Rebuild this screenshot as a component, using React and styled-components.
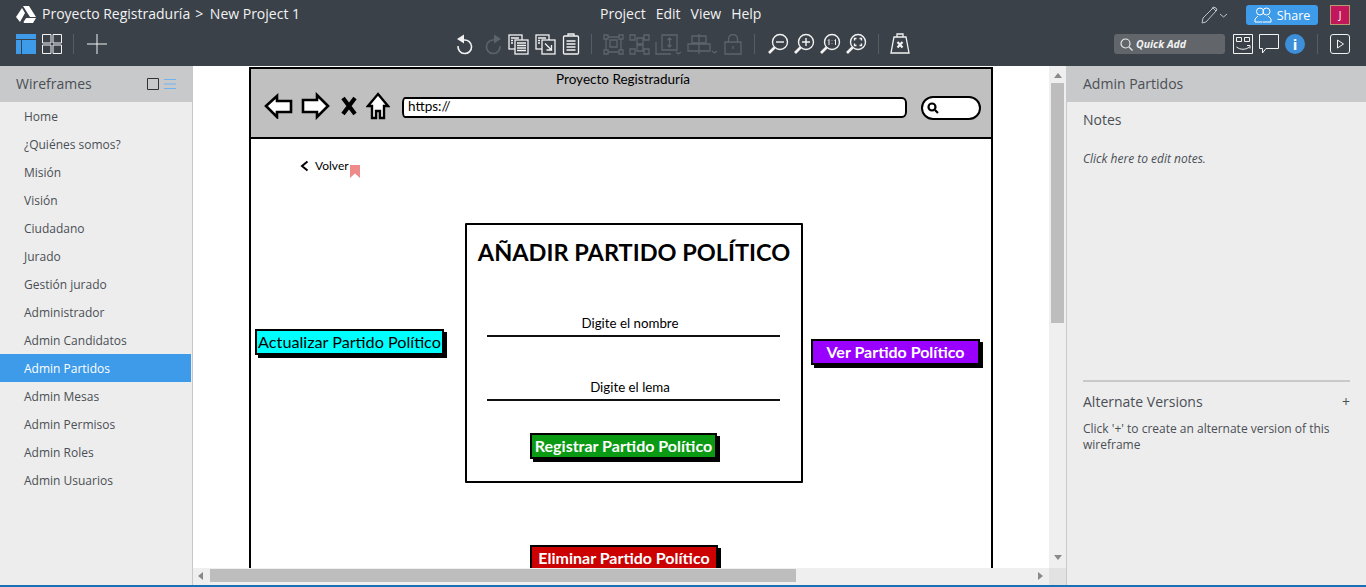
import React from "react";
import styled, { createGlobalStyle } from "styled-components";

const Global = createGlobalStyle`
  html, body { margin: 0; padding: 0; height: 100%; overflow: hidden; background: #3a4149; }
  #root { height: 100%; }
  * { box-sizing: border-box; }
`;

const pages = [
  "Home", "¿Quiénes somos?", "Misión", "Visión", "Ciudadano", "Jurado", "Gestión jurado",
  "Administrador", "Admin Candidatos", "Admin Partidos", "Admin Mesas", "Admin Permisos",
  "Admin Roles", "Admin Usuarios",
];

const Icon = ({ w = 24, h = 24, color = "#f2f2f2", sw = 1.3, children }) => (
  <svg width={w} height={h} viewBox={`0 0 ${w} ${h}`} fill="none" stroke={color} strokeWidth={sw} style={{ display: "block", flex: "none" }}>
    {children}
  </svg>
);

const Undo = ({ color = "#f2f2f2", head, arc }) => (
  <Icon w={20} h={22} color={color} sw={1.6}>
    <path d={arc} />
    <path d={head} fill={color} stroke="none" />
  </Icon>
);

const Docs = ({ arrow }) => (
  <Icon w={21} h={21}>
    <rect x="1" y="1" width="13" height="14" />
    <rect x="7" y="6" width="13" height="14" fill="#3a4149" />
    {arrow ? (
      <path d="M10 9.5 L16.5 16 M16.5 11 V16 H11.5" />
    ) : (
      <path d="M9 9h9M9 11.5h9M9 14h9M9 16.5h9" />
    )}
    <path d="M3 4h8M3 6.5h2M3 9h2" />
  </Icon>
);

const Magnifier = ({ children }) => (
  <Icon w={22} h={22} sw={1.4}>
    <circle cx="13" cy="9" r="7.5" />
    <path d="M7.5 14.5 L2 20" strokeWidth="2.6" />
    {children}
  </Icon>
);

const off = "#5c646c";

const Bar = styled.header`
  height: 66px;
  flex: none;
  background: #3a4149;
  color: #f2f2f2;
  font: 14px "Open Sans", sans-serif;
`;

const BarRow = styled.div`
  display: flex;
  align-items: center;
  height: ${(p) => p.$h}px;
  padding-left: 16px;
`;

const Brand = styled.div`
  width: 584px;
  display: flex;
  align-items: center;
  gap: 6px;
  white-space: nowrap;
  span { padding-bottom: 3px; }
  b { font-weight: 400; margin: 0 3px 0 5px; }
`;

const Menu = styled.nav`
  display: flex;
  gap: 10px;
  padding-bottom: 3px;
`;

const RightTools = styled.div`
  margin-left: auto;
  display: flex;
  align-items: center;
  padding-right: 16px;
`;

const ShareBtn = styled.div`
  width: 72px;
  height: 20px;
  margin-left: 18px;
  border-radius: 3px;
  background: #3d9be9;
  color: #fff;
  font-size: 12.5px;
  display: flex;
  align-items: center;
  justify-content: center;
  gap: 5px;
`;

const Avatar = styled.div`
  width: 20px;
  height: 20px;
  margin-left: 12px;
  background: #c2185b;
  border: 1px solid #b89a70;
  color: #fff;
  font-size: 10px;
  display: flex;
  align-items: center;
  justify-content: center;
`;

const LeftTools = styled.div`
  width: 440px;
  flex: none;
  display: flex;
  align-items: center;
  gap: 6px;
`;

const ToolGroup = styled.div`
  display: flex;
  align-items: center;
  gap: ${(p) => p.$gap || 6}px;
`;

const Sep = styled.i`
  display: block;
  width: 1px;
  height: 20px;
  background: #565d65;
  margin: 0 ${(p) => p.$m || 11}px;
`;

const QuickAdd = styled.div`
  width: 111px;
  height: 20px;
  background: #62666a;
  border-radius: 3px;
  display: flex;
  align-items: center;
  gap: 3px;
  padding-left: 6px;
  margin-right: 8px;
  font-size: 10.5px;
  font-weight: 700;
  font-style: italic;
`;

const Main = styled.main`
  flex: 1;
  min-height: 0;
  display: flex;
`;

const Side = styled.aside`
  width: 193px;
  flex: none;
  background: #ededed;
  border-right: 1px solid #c8c9cb;
  font-family: "Open Sans", sans-serif;
  color: #4a4f55;
`;

const PanelHead = styled.div`
  height: 36px;
  background: #c8c9cb;
  display: flex;
  align-items: center;
  padding: 0 0 2px 16px;
  font-size: 14px;
  color: #4a4f55;
  justify-content: space-between;
`;

const ViewToggle = styled.div`
  display: flex;
  align-items: center;
  gap: 5px;
  padding: 2px 16px 0 0;
`;

const PageItem = styled.div`
  height: 28px;
  line-height: 30px;
  padding-left: 24px;
  font-size: 12px;
  margin-right: 1px;
  background: ${(p) => (p.$active ? "#3d9be9" : "transparent")};
  color: ${(p) => (p.$active ? "#fff" : "#4a4f55")};
`;

const Stage = styled.section`
  flex: 1;
  min-width: 0;
  display: grid;
  grid-template-columns: 1fr 17px;
  grid-template-rows: 1fr 17px;
  border-right: 1px solid #c8c9cb;
`;

const Canvas = styled.div`
  position: relative;
  overflow: hidden;
  background: #fff;
`;

const Frame = styled.div`
  position: absolute;
  left: 56px;
  top: 1px;
  width: 744px;
  height: 700px;
  border: 2px solid #000;
  font-family: Lato, sans-serif;
  color: #000;
`;

const BrowserBar = styled.div`
  height: 70px;
  background: #c0c0c0;
  border-bottom: 2px solid #000;
  padding: 2px 10px 0 13px;
`;

const BrowserTitle = styled.div`
  text-align: center;
  font-size: 13.5px;
  line-height: 17px;
  padding-left: 1px;
`;

const BrowserRow = styled.div`
  display: flex;
  align-items: center;
  margin-top: 4px;
`;

const NavIcons = styled.div`
  display: flex;
  align-items: center;
  gap: 8px;
  width: 138px;
  flex: none;
`;

const UrlBox = styled.div`
  width: 505px;
  flex: none;
  height: 21px;
  margin-top: 3px;
  background: #fff;
  border: 2.5px solid #000;
  border-radius: 3px 5px 5px 3px / 6px;
  font-size: 13.5px;
  line-height: 15px;
  padding-left: 4px;
`;

const SearchPill = styled.div`
  width: 60px;
  flex: none;
  height: 24px;
  margin-left: 14px;
  margin-top: 3px;
  background: #fff;
  border: 2.5px solid #000;
  border-radius: 12px;
  padding: 4px 0 0 4px;
`;

const BackLink = styled.div`
  position: absolute;
  left: 49px;
  top: 89px;
  display: flex;
  align-items: center;
  gap: 6px;
  font-size: 12px;
  line-height: 16px;
`;

const Bookmark = styled.i`
  position: absolute;
  left: 99px;
  top: 96px;
  width: 10px;
  height: 13px;
  background: #ef8a8a;
  clip-path: polygon(0 0, 100% 0, 100% 100%, 50% 65%, 0 100%);
`;

const Card = styled.div`
  position: absolute;
  left: 214px;
  top: 154px;
  width: 338px;
  height: 260px;
  border: 2px solid #000;
  border-radius: 1px;
  display: flex;
  flex-direction: column;
  align-items: center;
`;

const CardTitle = styled.h1`
  margin: 12px 0 0;
  font-size: 23.5px;
  line-height: 30px;
  font-weight: 700;
  white-space: nowrap;
  font-family: Lato, sans-serif;
`;

const FieldLabel = styled.div`
  font-size: 13.3px;
  line-height: 16px;
  margin: ${(p) => p.$mt}px 8px 0 0;
`;

const FieldLine = styled.div`
  width: 293px;
  height: 2px;
  margin: 4px 2px 0 0;
  background: #111;
`;

const Sketch = styled.div`
  position: ${(p) => (p.$x === undefined ? "static" : "absolute")};
  left: ${(p) => p.$x}px;
  top: ${(p) => p.$y}px;
  margin: ${(p) => p.$m || "0"};
  align-self: ${(p) => p.$self || "auto"};
  width: ${(p) => p.$w}px;
  height: 26px;
  background: ${(p) => p.$bg};
  color: ${(p) => p.$fg};
  border: 2px solid #000;
  box-shadow: 3px 3px 0 #000;
  font-size: ${(p) => (p.$fg === "#fff" ? 16 : 16.2)}px;
  font-weight: ${(p) => (p.$fg === "#fff" ? 700 : 400)};
  line-height: 22px;
  text-align: center;
  white-space: nowrap;
`;

const ScrollTrack = styled.div`
  background: #efefef;
  position: relative;
  display: flex;
  flex-direction: ${(p) => (p.$vertical ? "column" : "row")};
  align-items: center;
  justify-content: space-between;
  padding: ${(p) => (p.$vertical ? "3px 0 4px" : "0 2px 2px 1px")};
`;

const Thumb = styled.div`
  position: absolute;
  background: #bdbdbd;
  ${(p) =>
    p.$vertical
      ? "left: 2px; width: 13px; top: 17px; height: 240px;"
      : "top: 1px; height: 13px; left: 17px; width: 586px;"}
`;

const Tri = styled.i`
  width: 0;
  height: 0;
  border: 4px solid transparent;
  ${(p) => `border-${p.$dir}-color: #8a8a8a;`}
  border-${(p) => p.$dir}-width: 5px;
`;

const Corner = styled.div`
  background: #e2e2e2;
`;

const Info = styled.aside`
  width: 299px;
  flex: none;
  background: #ededed;
  font-family: "Open Sans", sans-serif;
  color: #4a4f55;
  display: flex;
  flex-direction: column;
`;

const InfoBody = styled.div`
  padding: 0 16px;
  font-size: 12px;
  flex: 1;
  display: flex;
  flex-direction: column;
`;

const InfoTitle = styled.div`
  font-size: 14px;
  line-height: 20px;
  margin-top: ${(p) => p.$mt}px;
  display: flex;
  justify-content: space-between;
`;

const NoteHint = styled.div`
  font-style: italic;
  line-height: 16px;
  margin-top: 21px;
`;

const Divider = styled.div`
  height: 2px;
  background: #c8c9cb;
  margin-top: 213px;
`;

const AltHint = styled.div`
  line-height: 16px;
  margin-top: 9px;
`;

const Footer = styled.div`
  height: 2px;
  flex: none;
  background: #1a6fb5;
`;

const Page = styled.div`
  height: 100vh;
  display: flex;
  flex-direction: column;
`;

const InfoDot = styled.div`
  width: 20px;
  height: 20px;
  border-radius: 50%;
  background: #3d8fd9;
  color: #fff;
  font: 700 15px/20px "Open Sans", sans-serif;
  text-align: center;
`;

export default function App() {
  return (
    <Page>
      <Global />
      <Bar>
        <BarRow $h={30}>
          <Brand>
            <Icon w={20} h={18} sw={0}>
              <path d="M7 0h6l7 11h-6z M6 2l3 5-5 9-4-5z M7.500 16l2.600-4H20l-3 5H8z" fill="#fff" />
            </Icon>
            <span>Proyecto Registraduría<b>&gt;</b> New Project 1</span>
          </Brand>
          <Menu>
            <span>Project</span>
            <span>Edit</span>
            <span>View</span>
            <span>Help</span>
          </Menu>
          <RightTools>
            <Icon w={28} h={20} color="#bfc3c7" sw={1}>
              <path d="M2 18l1-5L13 3l3 3L6 17z M12 4l1-2 3 1 1 2-1 1" />
              <path d="M20 9l3.500 3L27 9" />
            </Icon>
            <ShareBtn>
              <Icon w={18} h={16} color="#fff" sw={1}>
                <circle cx="6" cy="4.500" r="3.500" />
                <circle cx="12.500" cy="4.500" r="3.500" />
                <path d="M1 15v-3l3-3M8.500 15H1M9 15h8v-3l-3-3" />
              </Icon>
              Share
            </ShareBtn>
            <Avatar>J</Avatar>
          </RightTools>
        </BarRow>
        <BarRow $h={28}>
          <LeftTools>
            <Icon w={20} h={20} color="#3d9be9" sw={0}>
              <path d="M0 0h20v5H0z M0 6h5v14H0z M6 6h14v14H6z" fill="#3d9be9" />
            </Icon>
            <Icon w={20} h={20} sw={1}>
              <path d="M.5.5h8.500v8.500H.5z M11 .5h8.500v8.500H11z M.5 11h8.500v8.500H.5z M11 11h8.500v8.500H11z" />
            </Icon>
            <Sep $m={5} />
            <Icon w={22} h={20} sw={1}>
              <path d="M2 10h20M12 0v20" />
            </Icon>
          </LeftTools>
          <ToolGroup $gap={6}>
            <Undo arc="M8 7 A6.800 6.800 0 1 1 2 13" head="M8 1.500 L8 10.500 L1 6 Z" />
            <Undo color={off} arc="M12 7 A6.800 6.800 0 1 0 18 13" head="M12 1.500 L12 10.500 L19 6 Z" />
            <Docs />
            <Docs arrow />
            <Icon w={18} h={22}>
              <rect x="1.500" y="3" width="15" height="18" rx="1" />
              <path d="M6 3V1h6v2M4.500 8h9M4.500 11h9M4.500 14h9M4.500 17h9" />
            </Icon>
          </ToolGroup>
          <Sep $m={11} />
          <ToolGroup $gap={5}>
            <Icon w={21} h={21} color={off}>
              <path d="M3 3h15v15H3z M7 6h7v7H7z" />
              <path d="M1 1h4v4H1z M16 1h4v4h-4z M1 16h4v4H1z M16 16h4v4h-4z" fill="#3a4149" />
            </Icon>
            <Icon w={21} h={21} color={off}>
              <path d="M1 1h5v5H1z M8 4h6v6H8z M15 1h5v5h-5z M1 15h5v5H1z M15 15h5v5h-5z M8 11h6v6H8z" />
            </Icon>
            <Icon w={27} h={21} color={off}>
              <path d="M7 1h15v15H7z M1 8v12h15 M14.500 4v9M12.500 6l2-2 2 2M12.500 11l2 2 2-2 M21 18l2.500 2 2.500-2" />
            </Icon>
            <Icon w={32} h={22} color={off}>
              <path d="M12 1v20M5 3h14v7H5z M1 11h22v7H1z M25 18l2.500 2 2.500-2" />
            </Icon>
            <Icon w={18} h={21} color={off}>
              <path d="M1 8h16v12H1z M4.500 8V5a4.500 4.500 0 0 1 9 0v3 M9 12v3" />
            </Icon>
          </ToolGroup>
          <Sep $m={12} />
          <ToolGroup $gap={4}>
            <Magnifier><path d="M9 9h8" /></Magnifier>
            <Magnifier><path d="M9 9h8M13 5v8" /></Magnifier>
            <Magnifier><path d="M10 12V6.500l-1 1M16.500 12V6.500l-1 1M13 7.500v.5M13 10.500v.5" strokeWidth="1" /></Magnifier>
            <Magnifier><path d="M9.500 7.500v-2h2M14.500 5.500h2v2M16.500 10.500v2h-2M11.500 12.500h-2v-2" /></Magnifier>
          </ToolGroup>
          <Sep $m={11} />
          <Icon w={20} h={22}>
            <path d="M4 4h12l3 16H1z M7 4V1h6v3" />
            <path d="M7.500 9l5 5.500M12.500 9l-5 5.500" strokeWidth="2.200" />
          </Icon>
          <RightTools>
            <QuickAdd>
              <Icon w={13} h={13} color="#e8e8e8" sw={1.200}>
                <circle cx="5.500" cy="5.500" r="4.500" />
                <path d="M9 9l3.500 3.500" />
              </Icon>
              Quick Add
            </QuickAdd>
            <ToolGroup $gap={6}>
              <Icon w={20} h={20} sw={1}>
                <path d="M.5.5h19v19H.5z M3.500 3.500h5v4h-5z M11.500 3.500h5v4h-5z M3.500 13c4 3 9 3 13 0M14 11.500h3v3" />
              </Icon>
              <Icon w={20} h={20} sw={1}>
                <path d="M.5.500h19v14H7l-3.500 4.500v-4.500H.5z" />
              </Icon>
              <InfoDot>i</InfoDot>
            </ToolGroup>
            <Sep $m={12} />
            <Icon w={20} h={20} sw={1}>
              <rect x=".5" y=".5" width="19" height="19" rx="2.500" />
              <path d="M7.500 6v8l6-4z" />
            </Icon>
          </RightTools>
        </BarRow>
      </Bar>
      <Main>
        <Side>
          <PanelHead>
            Wireframes
            <ViewToggle>
              <Icon w={12} h={12} color="#333" sw={1}>
                <path d="M.5.5h11v11H.5z" />
              </Icon>
              <Icon w={12} h={12} color="#6db3ee" sw={1}>
                <path d="M0 1.500h12M0 6h12M0 10.500h12" />
              </Icon>
            </ViewToggle>
          </PanelHead>
          {pages.map((name) => (
            <PageItem key={name} $active={name === "Admin Partidos"}>{name}</PageItem>
          ))}
        </Side>
        <Stage>
          <Canvas>
            <Frame>
              <BrowserBar>
                <BrowserTitle>Proyecto Registraduría</BrowserTitle>
                <BrowserRow>
                  <NavIcons>
                    <Icon w={29} h={26} color="#000" sw={2.600}>
                      <path d="M2 13 L13 3 V8 H27 V19 H13 V24 Z" fill="#fff" />
                    </Icon>
                    <Icon w={29} h={28} color="#000" sw={2.600}>
                      <path d="M27 14 L16 3 V8 H2 V20 H16 V25 Z" fill="#fff" />
                    </Icon>
                    <Icon w={20} h={22} color="#000" sw={4.200}>
                      <path d="M5 3 L17 19 M17 3 L5 19" />
                    </Icon>
                    <Icon w={24} h={28} color="#000" sw={2.400}>
                      <path d="M12 2 L22 14 H18 V26 H14 V19 H10 V26 H6 V14 H2 Z" fill="#fff" />
                    </Icon>
                  </NavIcons>
                  <UrlBox>https://</UrlBox>
                  <SearchPill>
                    <Icon w={12} h={12} color="#000" sw={2.200}>
                      <circle cx="5" cy="5" r="3.500" />
                      <path d="M8 8l3 3" />
                    </Icon>
                  </SearchPill>
                </BrowserRow>
              </BrowserBar>
              <BackLink>
                <Icon w={9} h={12} color="#000" sw={2}>
                  <path d="M7.500 1.500 L2 6 L7.500 10.500" />
                </Icon>
                Volver
              </BackLink>
              <Bookmark />
              <Sketch $x={4} $y={260} $w={189} $bg="#00ffff" $fg="#000">Actualizar Partido Político</Sketch>
              <Card>
                <CardTitle>AÑADIR PARTIDO POLÍTICO</CardTitle>
                <FieldLabel $mt={48}>Digite el nombre</FieldLabel>
                <FieldLine />
                <FieldLabel $mt={42}>Digite el lema</FieldLabel>
                <FieldLine />
                <Sketch $self="flex-start" $m="32px 0 0 63px" $w={187} $bg="#0a9a14" $fg="#fff">Registrar Partido Político</Sketch>
              </Card>
              <Sketch $x={560} $y={270} $w={169} $bg="#9900ff" $fg="#fff">Ver Partido Político</Sketch>
              <Sketch $x={279} $y={476} $w={188} $bg="#cc0000" $fg="#fff">Eliminar Partido Político</Sketch>
            </Frame>
          </Canvas>
          <ScrollTrack $vertical>
            <Tri $dir="bottom" />
            <Thumb $vertical />
            <Tri $dir="top" />
          </ScrollTrack>
          <ScrollTrack>
            <Tri $dir="right" />
            <Thumb />
            <Tri $dir="left" />
          </ScrollTrack>
          <Corner />
        </Stage>
        <Info>
          <PanelHead>Admin Partidos</PanelHead>
          <InfoBody>
            <InfoTitle $mt={8}>Notes</InfoTitle>
            <NoteHint>Click here to edit notes.</NoteHint>
            <Divider />
            <InfoTitle $mt={10}>
              Alternate Versions <span>+</span>
            </InfoTitle>
            <AltHint>Click '+' to create an alternate version of this wireframe</AltHint>
          </InfoBody>
        </Info>
      </Main>
      <Footer />
    </Page>
  );
}
